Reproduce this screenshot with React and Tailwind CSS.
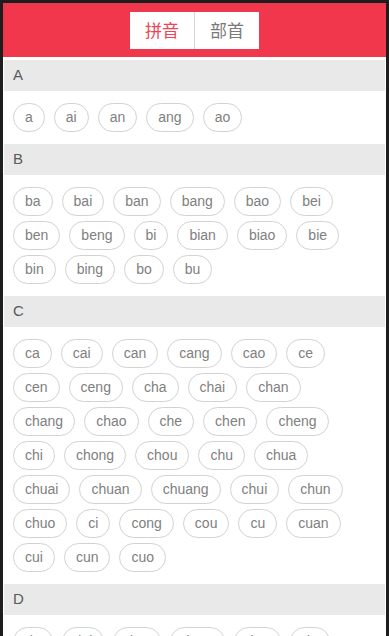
import React from "react";

const sections = [
  { letter: "A", items: ["a", "ai", "an", "ang", "ao"] },
  {
    letter: "B",
    items: ["ba", "bai", "ban", "bang", "bao", "bei", "ben", "beng", "bi", "bian", "biao", "bie", "bin", "bing", "bo", "bu"],
  },
  {
    letter: "C",
    items: [
      "ca", "cai", "can", "cang", "cao", "ce", "cen", "ceng", "cha", "chai", "chan", "chang", "chao", "che", "chen", "cheng",
      "chi", "chong", "chou", "chu", "chua", "chuai", "chuan", "chuang", "chui", "chun", "chuo", "ci", "cong", "cou", "cu",
      "cuan", "cui", "cun", "cuo",
    ],
  },
  {
    letter: "D",
    items: ["da", "dai", "dan", "dang", "dao", "de", "deng", "di", "dian", "diao", "die", "ding", "diu", "dong", "dou", "du", "duan", "dui", "dun", "duo"],
  },
];

const latin = { fontFamily: '"Liberation Sans", Arial, sans-serif' };
const cjk = { fontFamily: '"Noto Sans CJK SC", "Noto Sans", sans-serif' };

export default function App() {
  return (
    <div className="h-[636px] w-[389px] overflow-hidden bg-[#1d1d1d] pl-[3px] pr-[3px] pt-[3px]">
      <div className="h-full bg-white">
        <div className="flex h-[54px] items-center justify-center bg-[#f0374b]">
          <div className="flex h-[37px] w-[129px] bg-white" style={cjk}>
            <div className="flex flex-1 items-center justify-center text-[17px] text-[#ee4455]">拼音</div>
            <div className="w-px self-stretch bg-[#d6d6d6]" />
            <div className="flex flex-1 items-center justify-center text-[17px] text-[#7a7a7a]">部首</div>
          </div>
        </div>
        <div className="h-[3px]" />
        {sections.map((s) => (
          <div key={s.letter}>
            <div
              className="mx-[1px] flex h-[31px] items-center bg-[#e9e9e9] pl-[9px] text-[15px] font-medium text-[#5a5a5a]"
              style={latin}
            >
              {s.letter}
            </div>
            <div className="flex flex-wrap gap-x-[9px] gap-y-[5px] pb-[12px] pl-[10px] pr-[20px] pt-[12px]" style={latin}>
              {s.items.map((it) => (
                <div
                  key={it}
                  className="flex h-[29px] items-center rounded-full border-[1.5px] border-[#d2d2d2] px-[11px] text-[14px] text-[#808080]"
                >
                  {it}
                </div>
              ))}
            </div>
          </div>
        ))}
      </div>
    </div>
  );
}
